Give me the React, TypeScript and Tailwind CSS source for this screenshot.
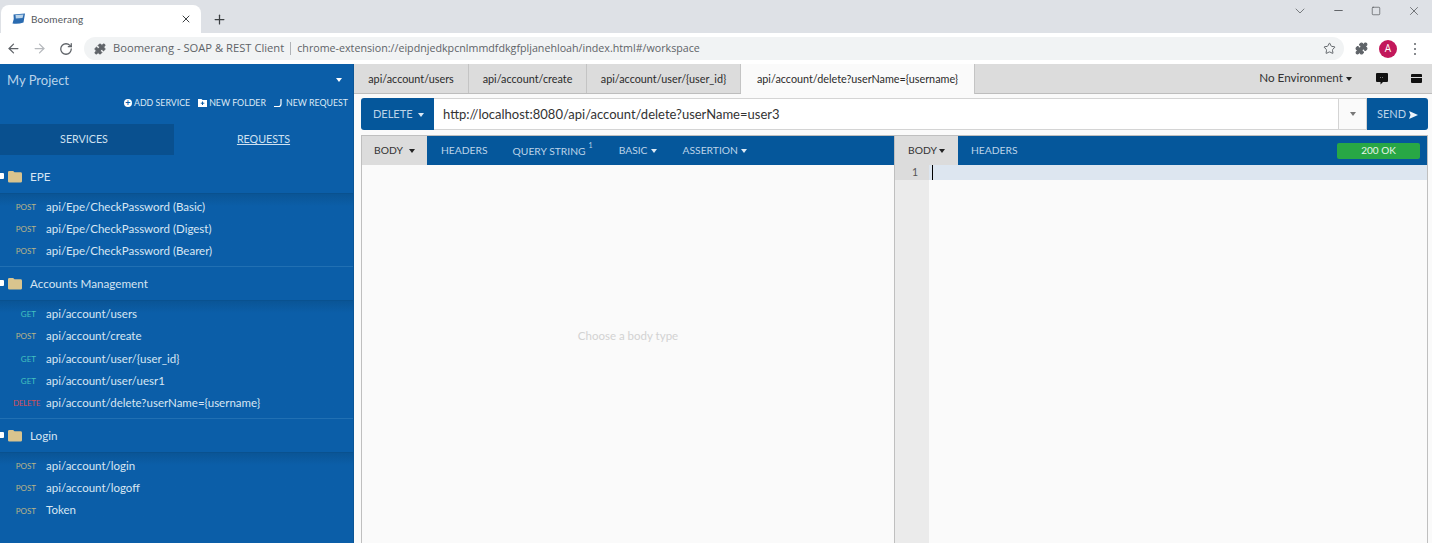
import React from "react";
import { ArrowLeft, ArrowRight, RotateCw, Star, Puzzle, X, Plus, Minus, Square, ChevronDown } from "lucide-react";

function Caret({ cls = "border-t-white" }: { cls?: string }) {
  return <span className={`inline-block w-0 h-0 border-x-[3.500px] border-x-transparent border-t-[4px] ${cls}`} />;
}

function Folder() {
  return (
    <svg width="14" height="13" viewBox="0 0 15 13" className="shrink-0">
      <path d="M1.500 0.500h4l1.500 1.500h6.500a1.500 1.500 0 0 1 1.500 1.500v8a1.500 1.500 0 0 1-1.500 1.500h-12A1.500 1.500 0 0 1 0 11.500V2a1.500 1.500 0 0 1 1.500-1.500z" fill="#d9c48e" />
    </svg>
  );
}

type Req = [string, string];

function Group({ name, items, h = "h-[34px]", last }: { name: string; items: Req[]; h?: string; last?: boolean }) {
  return (
    <div className="flex flex-col">
      <div className={`flex items-center ${h} border-b border-[#09518f] relative`}>
        <span className="absolute left-0 bottom-[14px] w-[4px] h-[6px] bg-white rounded-r-[1px]" />
        <div className="pl-[8px] flex items-center gap-[8px]">
          <Folder />
          <span className="text-[11.700px] text-[#d5e4f2]">{name}</span>
        </div>
      </div>
      <div className={`flex flex-col pt-[1px] bg-gradient-to-b from-[#0a5596] to-[#0b5ea8] to-[12px] ${last ? "" : "pb-[4px] border-b border-[#2170b3]"}`}>
        {items.map(([m, t]) => (
          <div key={t} className="flex items-center h-[22.400px]">
            <span
              className={`w-[40px] text-right text-[8px] pt-[1px] shrink-0 ${m === "GET" ? "text-[#45c1bf] pr-[4px]" : m === "POST" ? "text-[#b9b488] pr-[4px]" : "text-[#d0505c] tracking-[-0.300px]"}`}
            >
              {m}
            </span>
            <span className="ml-[6px] text-[11.500px] text-[#d8e6f3] whitespace-nowrap">{t}</span>
          </div>
        ))}
      </div>
    </div>
  );
}

export default function App() {
  return (
    <div className="w-[1432px] h-[543px] overflow-hidden flex flex-col bg-white font-['Open_Sans','Noto_Sans',sans-serif]">
      {/* Tab strip */}
      <div className="h-[33px] bg-[#dee1e6] flex items-end shrink-0 relative">
        <div className="ml-[1px] w-[200px] h-[28px] bg-white rounded-t-[8px] flex items-center pl-[11px] pr-[9px]">
          <svg width="14" height="12" viewBox="0 0 14 12" className="shrink-0">
            <path d="M1.500 1.500 L13 0.500 L11.500 9.500 Q6 11.500 0.500 10.500 Q2.500 6 1.500 1.500z" fill="#2a6bb0" />
            <path d="M3.500 2 L11.500 1.500 L10.500 5 L3.800 5.500z" fill="#b9d3ea" />
          </svg>
          <span className="ml-[5px] text-[10px] font-['Lato',sans-serif] tracking-[0.200px] text-[#54585d] flex-1">Boomerang</span>
          <X size={12} strokeWidth={2} className="text-[#3c4043]" />
        </div>
        <Plus size={15} strokeWidth={2} className="ml-[11px] mb-[6px] text-[#3c4043]" />
        <div className="ml-auto flex items-center h-[21px] self-start text-[#45484b]">
          <ChevronDown size={16} strokeWidth={1} className="mr-[24px]" />
          <Minus size={13} strokeWidth={1.500} className="mr-[26px]" />
          <Square size={10} strokeWidth={1.500} className="mr-[26px]" />
          <X size={14} strokeWidth={1.200} className="mr-[11px]" />
        </div>
      </div>
      {/* Toolbar */}
      <div className="h-[31px] bg-white flex items-center shrink-0 pl-[6px]">
        <ArrowLeft size={15} strokeWidth={2} className="text-[#5f6368]" />
        <ArrowRight size={15} strokeWidth={2} className="ml-[11px] text-[#b6b9bd]" />
        <RotateCw size={14} strokeWidth={2.200} className="ml-[12px] text-[#5f6368]" />
        <div className="ml-[11px] w-[1260px] h-[23px] bg-[#f1f3f4] rounded-full flex items-center pl-[10px] shrink-0">
          <Puzzle size={12} fill="#5f6368" className="text-[#5f6368]" />
          <span className="ml-[7px] text-[11.200px] text-[#5f6368] whitespace-nowrap">Boomerang - SOAP &amp; REST Client</span>
          <span className="mx-[6px] w-px h-[13px] bg-[#b0b3b7]" />
          <span className="text-[10.700px] text-[#5f6368] whitespace-nowrap">chrome-extension://eipdnjedkpcnlmmdfdkgfpljanehloah/index.html#/workspace</span>
          <Star size={13} strokeWidth={1.800} className="ml-auto mr-[8px] text-[#5f6368]" />
        </div>
        <Puzzle size={13} fill="#5f6368" className="ml-[11px] text-[#5f6368]" />
        <span className="ml-[11px] w-[18px] h-[18px] rounded-full bg-[#c2185b] text-white text-[10px] flex items-center justify-center">A</span>
        <span className="ml-[17px] flex flex-col gap-[3px]">
          <span className="w-[2px] h-[2px] rounded-full bg-[#5f6368]" />
          <span className="w-[2px] h-[2px] rounded-full bg-[#5f6368]" />
          <span className="w-[2px] h-[2px] rounded-full bg-[#5f6368]" />
        </span>
      </div>
      {/* App */}
      <div className="flex flex-1 min-h-0 bg-[#fafafa] font-['Lato','Open_Sans',sans-serif]">
        {/* Sidebar */}
        <div className="w-[354px] shrink-0 bg-[#0b5ea8] flex flex-col border-r border-[#0a5596] relative">
          <div className="h-[60px] flex flex-col shrink-0">
            <div className="flex items-center justify-between pl-[7px] pr-[11px] pt-[6px]">
              <span className="text-[13px] leading-[20px] text-[#b9d3ea]">My Project</span>
              <Caret />
            </div>
            <div className="flex justify-end items-center gap-[8px] pr-[5px] mt-[6px] text-[8.800px] leading-[14px] text-[#dce9f5] whitespace-nowrap">
              <span className="flex items-center gap-[2px]">
                <span className="w-[8px] h-[8px] rounded-full bg-white text-[#0b5ea8] text-[9px] leading-[8px] font-bold text-center">+</span>
                ADD SERVICE
              </span>
              <span className="flex items-center gap-[2px]">
                <svg width="9" height="8" viewBox="0 0 9 8"><path d="M0 0h3.500l1 1H9v7H0z" fill="#fff" /><path d="M4.500 2.500v3.500M2.800 4.200h3.500" stroke="#0b5ea8" /></svg>
                NEW FOLDER
              </span>
              <span className="flex items-center gap-[3px]">
                <svg width="9" height="9" viewBox="0 0 9 9" fill="none"><path d="M7 0v5a2.500 2.500 0 0 1-2.500 2.500H0" stroke="#fff" strokeWidth="1.200" /></svg>
                NEW REQUEST
              </span>
            </div>
          </div>
          <div className="flex h-[31px] shrink-0 text-[10.700px] text-[#cfe0f0]">
            <div className="w-[174px] bg-[#09508f] flex items-center justify-center pr-[6px]">SERVICES</div>
            <div className="flex-1 flex items-center justify-center underline">REQUESTS</div>
          </div>
          <div className="flex flex-col">
            <Group name="EPE" h="h-[39px] pt-[5px]" items={[["POST", "api/Epe/CheckPassword (Basic)"], ["POST", "api/Epe/CheckPassword (Digest)"], ["POST", "api/Epe/CheckPassword (Bearer)"]]} />
            <Group name="Accounts Management" items={[["GET", "api/account/users"], ["POST", "api/account/create"], ["GET", "api/account/user/{user_id}"], ["GET", "api/account/user/uesr1"], ["DELETE", "api/account/delete?userName={username}"]]} />
            <Group name="Login" last items={[["POST", "api/account/login"], ["POST", "api/account/logoff"], ["POST", "Token"]]} />
          </div>
        </div>
        {/* Main */}
        <div className="flex-1 min-w-0 flex flex-col">
          {/* Tabs */}
          <div className="h-[30px] bg-[#dcdcdc] flex items-stretch shrink-0 border-b border-[#bdbdbd] text-[10.800px] text-[#2b2b2b] whitespace-nowrap">
            <div className="w-[115px] pt-[1px] flex items-center justify-center border-r border-[#c4c4c4]">api/account/users</div>
            <div className="w-[118px] pt-[1px] flex items-center justify-center border-r border-[#c4c4c4]">api/account/create</div>
            <div className="w-[154px] pt-[1px] flex items-center justify-center border-r border-[#c4c4c4]">api/account/user/{"{user_id}"}</div>
            <div className="w-[234px] pt-[1px] -mb-px bg-[#fafafa] flex items-center justify-center border-r border-[#c4c4c4]">api/account/delete?userName={"{username}"}</div>
            <div className="ml-auto flex items-center pr-[10px]">
              <span className="text-[11.700px] text-[#333] mr-[3px] pb-[2px]">No Environment</span>
              <Caret cls="border-t-[#222]" />
              <svg width="12" height="12" viewBox="0 0 12 12" className="ml-[24px]"><path d="M1 0h10a1 1 0 0 1 1 1v7a1 1 0 0 1-1 1H7l-2.500 2.500V9H1a1 1 0 0 1-1-1V1a1 1 0 0 1 1-1z" fill="#111" /><path d="M4 4.500h4" stroke="#777" strokeWidth="1" strokeDasharray="1 1" /></svg>
              <svg width="11" height="9" viewBox="0 0 11 9" className="ml-[23px]"><path d="M1 0h9a1 1 0 0 1 1 1v2H0V1a1 1 0 0 1 1-1zM0 4h11v4a1 1 0 0 1-1 1H1a1 1 0 0 1-1-1z" fill="#111" /></svg>
            </div>
          </div>
          {/* URL bar */}
          <div className="flex h-[32px] mt-[4px] ml-[7px] mr-[4px] shrink-0">
            <div className="w-[73px] pt-[1px] pl-[12px] bg-[#05579b] rounded-l-[3px] flex items-center gap-[5px] text-[11px] text-[#bcd3e8]">
              DELETE <Caret cls="border-t-[#dce9f5]" />
            </div>
            <div className="flex-1 pt-[1px] bg-white border-y border-[#d4d4d4] flex items-center pl-[9px] text-[13px] text-[#333]">
              http://localhost:8080/api/account/delete?userName=user3
            </div>
            <div className="w-[29px] bg-[#fafafa] border border-[#d4d4d4] flex items-center justify-center">
              <Caret cls="border-t-[#777]" />
            </div>
            <div className="w-[61px] pt-[1px] bg-[#05579b] rounded-r-[3px] flex items-center justify-center gap-[3px] text-[11px] text-[#bcd3e8]">
              SEND
              <svg width="9" height="8" viewBox="0 0 9 8"><path d="M0 0l9 4-9 4 1.500-4z" fill="#eef4fa" /></svg>
            </div>
          </div>
          {/* Panes */}
          <div className="flex flex-1 min-h-0 mt-[5px] ml-[7px] mr-[4px] border-l border-r border-t border-[#bfbfbf]">
            <div className="w-[533px] shrink-0 flex flex-col border-r border-[#bfbfbf]">
              <div className="h-[29px] bg-[#05579b] flex items-stretch shrink-0 text-[10.300px] text-[#bcd3e8]">
                <div className="w-[65px] pt-[1px] bg-[#dcdcdc] text-[#333] flex items-center justify-center gap-[6px]">BODY <Caret cls="border-t-[#222]" /></div>
                <div className="ml-[14px] pt-[1px] flex items-center">HEADERS</div>
                <div className="ml-[25px] flex items-start pt-[8px]">QUERY STRING<sup className="ml-[3px] mt-[4px] text-[7px]">1</sup></div>
                <div className="ml-[26px] pt-[1px] flex items-center gap-[3px]">BASIC <Caret cls="border-t-[#dce9f5]" /></div>
                <div className="ml-[26px] pt-[1px] flex items-center gap-[3px]">ASSERTION <Caret cls="border-t-[#dce9f5]" /></div>
              </div>
              <div className="flex-1 flex items-center justify-center text-[11.500px] text-[#d2d2d2] pb-[37px]">Choose a body type</div>
            </div>
            <div className="flex-1 min-w-0 flex flex-col">
              <div className="h-[29px] bg-[#05579b] flex items-stretch shrink-0 text-[10.300px] text-[#bcd3e8]">
                <div className="w-[63px] pt-[1px] bg-[#dcdcdc] text-[#333] flex items-center justify-center gap-[2px]">BODY<Caret cls="border-t-[#222]" /></div>
                <div className="ml-[13px] pt-[1px] flex items-center">HEADERS</div>
                <div className="ml-auto mr-[7px] self-center w-[83px] h-[16px] bg-[#28a745] rounded-[2px] flex items-center justify-center text-[10px] text-[#e8f6ea]">200 OK</div>
              </div>
              <div className="flex flex-1 min-h-0">
                <div className="w-[34px] bg-[#ebebeb] shrink-0">
                  <div className="h-[15px] bg-[#dcdcdc] text-[10.500px] leading-[15px] text-[#555] text-right pr-[11px]">1</div>
                </div>
                <div className="flex-1 bg-[#fafafa]">
                  <div className="h-[15px] bg-[#dde6f0] relative">
                    <span className="absolute left-[3px] top-0 w-px h-[15px] bg-black" />
                  </div>
                </div>
              </div>
            </div>
          </div>
        </div>
      </div>
    </div>
  );
}
